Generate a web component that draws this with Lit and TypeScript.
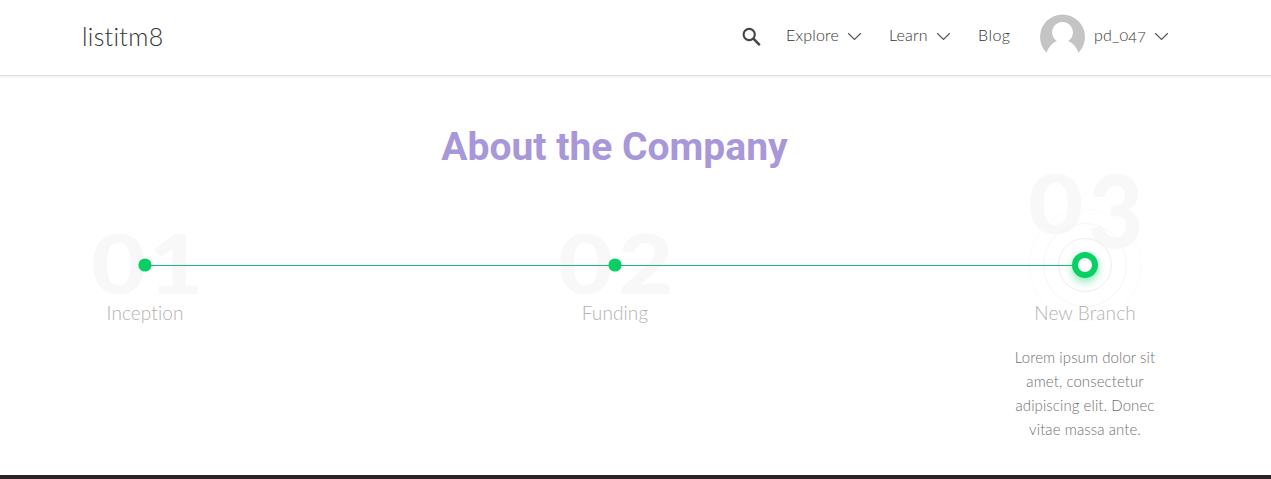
import { LitElement, html, css, svg } from "lit";
import { customElement, property } from "lit/decorators.js";

const chevron = html`<svg class="chevron" width="15" height="9" viewBox="0 0 15 9" fill="none">
  <path d="M1.2 1.2 7.5 7.4 13.8 1.2" stroke="#555" stroke-width="1.2" /></svg>`;

@customElement("site-header")
export class SiteHeader extends LitElement {
  static styles = css`
    :host { display: block; }
    .bar {
      display: flex; align-items: center; justify-content: space-between;
      box-sizing: border-box; height: 76px; padding: 0 102px 2px 82px;
      background: #fff; border-bottom: 1px solid #dfdfdf; box-shadow: 0 1px 2px rgba(0,0,0,.08);
      font: 300 16px/20px Lato, sans-serif; color: #333; font-variant-ligatures: none;
    }
    .brand { font-size: 25px; line-height: 30px; letter-spacing: .3px; padding-bottom: 1px; }
    .nav { display: flex; align-items: center; height: 100%; }
    .search { width: 20px; height: 20px; margin-right: 24px; }
    .item { display: flex; align-items: center; }
    .label { white-space: nowrap; letter-spacing: .2px; padding-bottom: 3px; }
    .explore { width: 61px; } .learn { width: 47px; } .blog { width: 62px; letter-spacing: .5px; } .user { width: 60px; }
    .user { font-variant-numeric: oldstyle-nums; }
    .chevron { display: block; flex: none; }
    .gap { margin-right: 27px; }
    .avatar { width: 45px; height: 45px; margin-right: 9px; flex: none; }
  `;
  render() {
    return html`<header class="bar">
      <div class="brand">listitm8</div>
      <nav class="nav">
        <svg class="search" viewBox="0 0 20 20" fill="none" stroke="#444">
          <circle cx="7.2" cy="7.5" r="5.6" stroke-width="2.1" />
          <path d="m11.4 11.7 6.4 6.4" stroke-width="2.5" />
        </svg>
        <div class="item gap"><span class="label explore">Explore</span>${chevron}</div>
        <div class="item gap"><span class="label learn">Learn</span>${chevron}</div>
        <div class="item"><span class="label blog">Blog</span></div>
        <div class="item">
          <svg class="avatar" viewBox="0 0 45 45">
            <path fill="#c4c4c4" d="M6.5 38.8A22.5 22.5 0 1 1 38.5 38.8C36.5 33 33 29 28.2 27A10.4 10.4 0 1 0 16.8 27C12 29 8.5 33 6.5 38.8Z" />
          </svg>
          <span class="label user">pd_047</span>${chevron}
        </div>
      </nav>
    </header>`;
  }
}

interface Step { digit: string; title: string; text: string[]; active: boolean; }

const STEPS: Step[] = [
  { digit: "1", title: "Inception", text: [], active: false },
  { digit: "2", title: "Funding", text: [], active: false },
  { digit: "3", title: "New Branch", active: true,
    text: ["Lorem ipsum dolor sit", "amet, consectetur", "adipiscing elit. Donec", "vitae massa ante."] },
];

@customElement("timeline-step")
export class TimelineStep extends LitElement {
  @property({ attribute: false }) step!: Step;
  static styles = css`
    :host { display: block; width: 160px; text-align: center; font-family: Lato, sans-serif; font-weight: 300; font-variant-ligatures: none; }
    .art { display: block; width: 160px; height: 130px; overflow: visible; }
    .ghost { font: 900 81px Lato, sans-serif; fill: #f8f8f8; }
    .title { height: 24px; font-size: 19px; line-height: 24px; letter-spacing: .1px; color: #b2b2b2; white-space: nowrap; }
    .text { margin-top: 20px; font-size: 15px; line-height: 24px; letter-spacing: .08px; color: #707070; white-space: nowrap; }
    .line { fill: #1fb683; }
    .glow { filter: drop-shadow(0 4px 4px rgba(3,211,98,.45)); }
  `;
  render() {
    const { digit, title, text, active } = this.step;
    const top = active ? 63 : 123;
    const descends = digit === "3";
    return html`
      <svg class="art" viewBox="0 0 160 130">
        <g class="ghost">
          <text transform="translate(${digit === "1" ? 26 : 23} ${top}) scale(1.18 1)">0</text>
          <text transform="translate(83 ${descends ? top + 14 : top}) scale(1.18 ${descends ? 1.25 : 1})">${digit}</text>
        </g>
        ${active
          ? svg`<g fill="none" stroke="#f6f6f6">
              <circle cx="80" cy="94" r="56" stroke="#fbfbfb" /><circle cx="80" cy="94" r="41.5" /><circle cx="80" cy="94" r="26.5" stroke="#ededed" />
            </g>`
          : ""}
        ${digit === "1" ? "" : svg`<rect class="line" x="-390" y="94" width="470" height="1" />`}
        ${active
          ? svg`<circle class="glow" cx="80" cy="94" r="10" fill="#fff" stroke="#08d163" stroke-width="6" />`
          : svg`<circle cx="80" cy="94" r="6.6" fill="#08d163" />`}
      </svg>
      <div class="title">${title}</div>
      ${text.length ? html`<div class="text">${text.map((t) => html`<div>${t}</div>`)}</div>` : ""}
    `;
  }
}

@customElement("app-root")
export class AppRoot extends LitElement {
  static styles = css`
    :host { display: flex; flex-direction: column; box-sizing: border-box; height: 479px; background: #fff; overflow: hidden; }
    .heading { margin: 47px 0 0; width: 1229px; text-align: center; font: 700 39px/48px Roboto, sans-serif; color: #a897d9; }
    .steps { display: flex; justify-content: space-between; width: 1100px; margin-left: 65px; }
    .foot { height: 4px; margin-top: auto; background: #2c2329; }
  `;
  render() {
    return html`
      <site-header></site-header>
      <h1 class="heading">About the Company</h1>
      <main class="steps">${STEPS.map((s) => html`<timeline-step .step=${s}></timeline-step>`)}</main>
      <div class="foot"></div>
    `;
  }
}
